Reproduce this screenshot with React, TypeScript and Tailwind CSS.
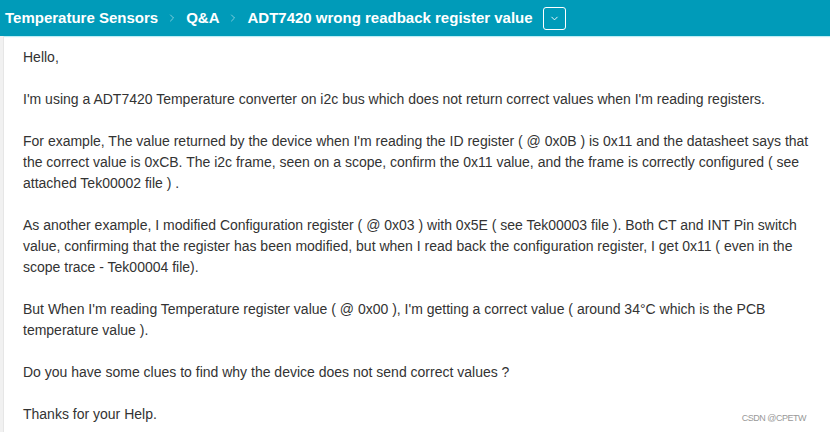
import { ChevronRight, ChevronDown } from 'lucide-react';

const paragraphs: string[][] = [
  ['Hello,'],
  ["I'm using a ADT7420 Temperature converter on i2c bus which does not return correct values when I'm reading registers."],
  [
    "For example, The value returned by the device when I'm reading the ID register ( @ 0x0B ) is 0x11 and the datasheet says that",
    'the correct value is 0xCB. The i2c frame, seen on a scope, confirm the 0x11 value, and the frame is correctly configured ( see',
    'attached Tek00002 file ) .',
  ],
  [
    'As another example, I modified Configuration register ( @ 0x03 ) with 0x5E ( see Tek00003 file ). Both CT and INT Pin switch',
    'value, confirming that the register has been modified, but when I read back the configuration register, I get 0x11 ( even in the',
    'scope trace - Tek00004 file).',
  ],
  [
    "But When I'm reading Temperature register value ( @ 0x00 ), I'm getting a correct value ( around 34°C which is the PCB",
    'temperature value ).',
  ],
  ['Do you have some clues to find why the device does not send correct values ?'],
  ['Thanks for your Help.'],
];

function Breadcrumb() {
  return (
    <header className="h-[36px] bg-[#009bb9] flex items-center pl-[5px] text-white font-bold text-[15px] shadow-[0_1px_1px_#bdeef5]">
      <span>Temperature Sensors</span>
      <ChevronRight size={12} strokeWidth={2} className="mx-[8px] text-white/50" />
      <span>Q&amp;A</span>
      <ChevronRight size={12} strokeWidth={2} className="mx-[8px] text-white/50" />
      <span>ADT7420 wrong readback register value</span>
      <button className="ml-[10px] w-[23px] h-[23px] border border-white rounded-[3px] flex items-center justify-center">
        <ChevronDown size={11} strokeWidth={2} />
      </button>
    </header>
  );
}

export default function App() {
  return (
    <div className="relative w-[830px] h-[432px] overflow-hidden bg-white font-['Liberation_Sans',Arial,sans-serif]">
      <Breadcrumb />
      <div className="flex h-[396px]">
        <div className="w-[4px] bg-[#f1f1f1] border-r border-[#e6e6e6]" />
        <div className="pl-[19px] pt-[11px] text-[14px] leading-[21px] text-[#333]">
          {paragraphs.map((lines, i) => (
            <p key={i} className="mb-[21px] whitespace-nowrap">
              {lines.map((l, j) => (
                <span key={j}>
                  {l}
                  {j < lines.length - 1 && <br />}
                </span>
              ))}
            </p>
          ))}
        </div>
      </div>
      <span className="absolute right-[24px] bottom-[7px] text-[9px] tracking-[-0.5px] text-[#999]">CSDN @CPETW</span>
    </div>
  );
}
